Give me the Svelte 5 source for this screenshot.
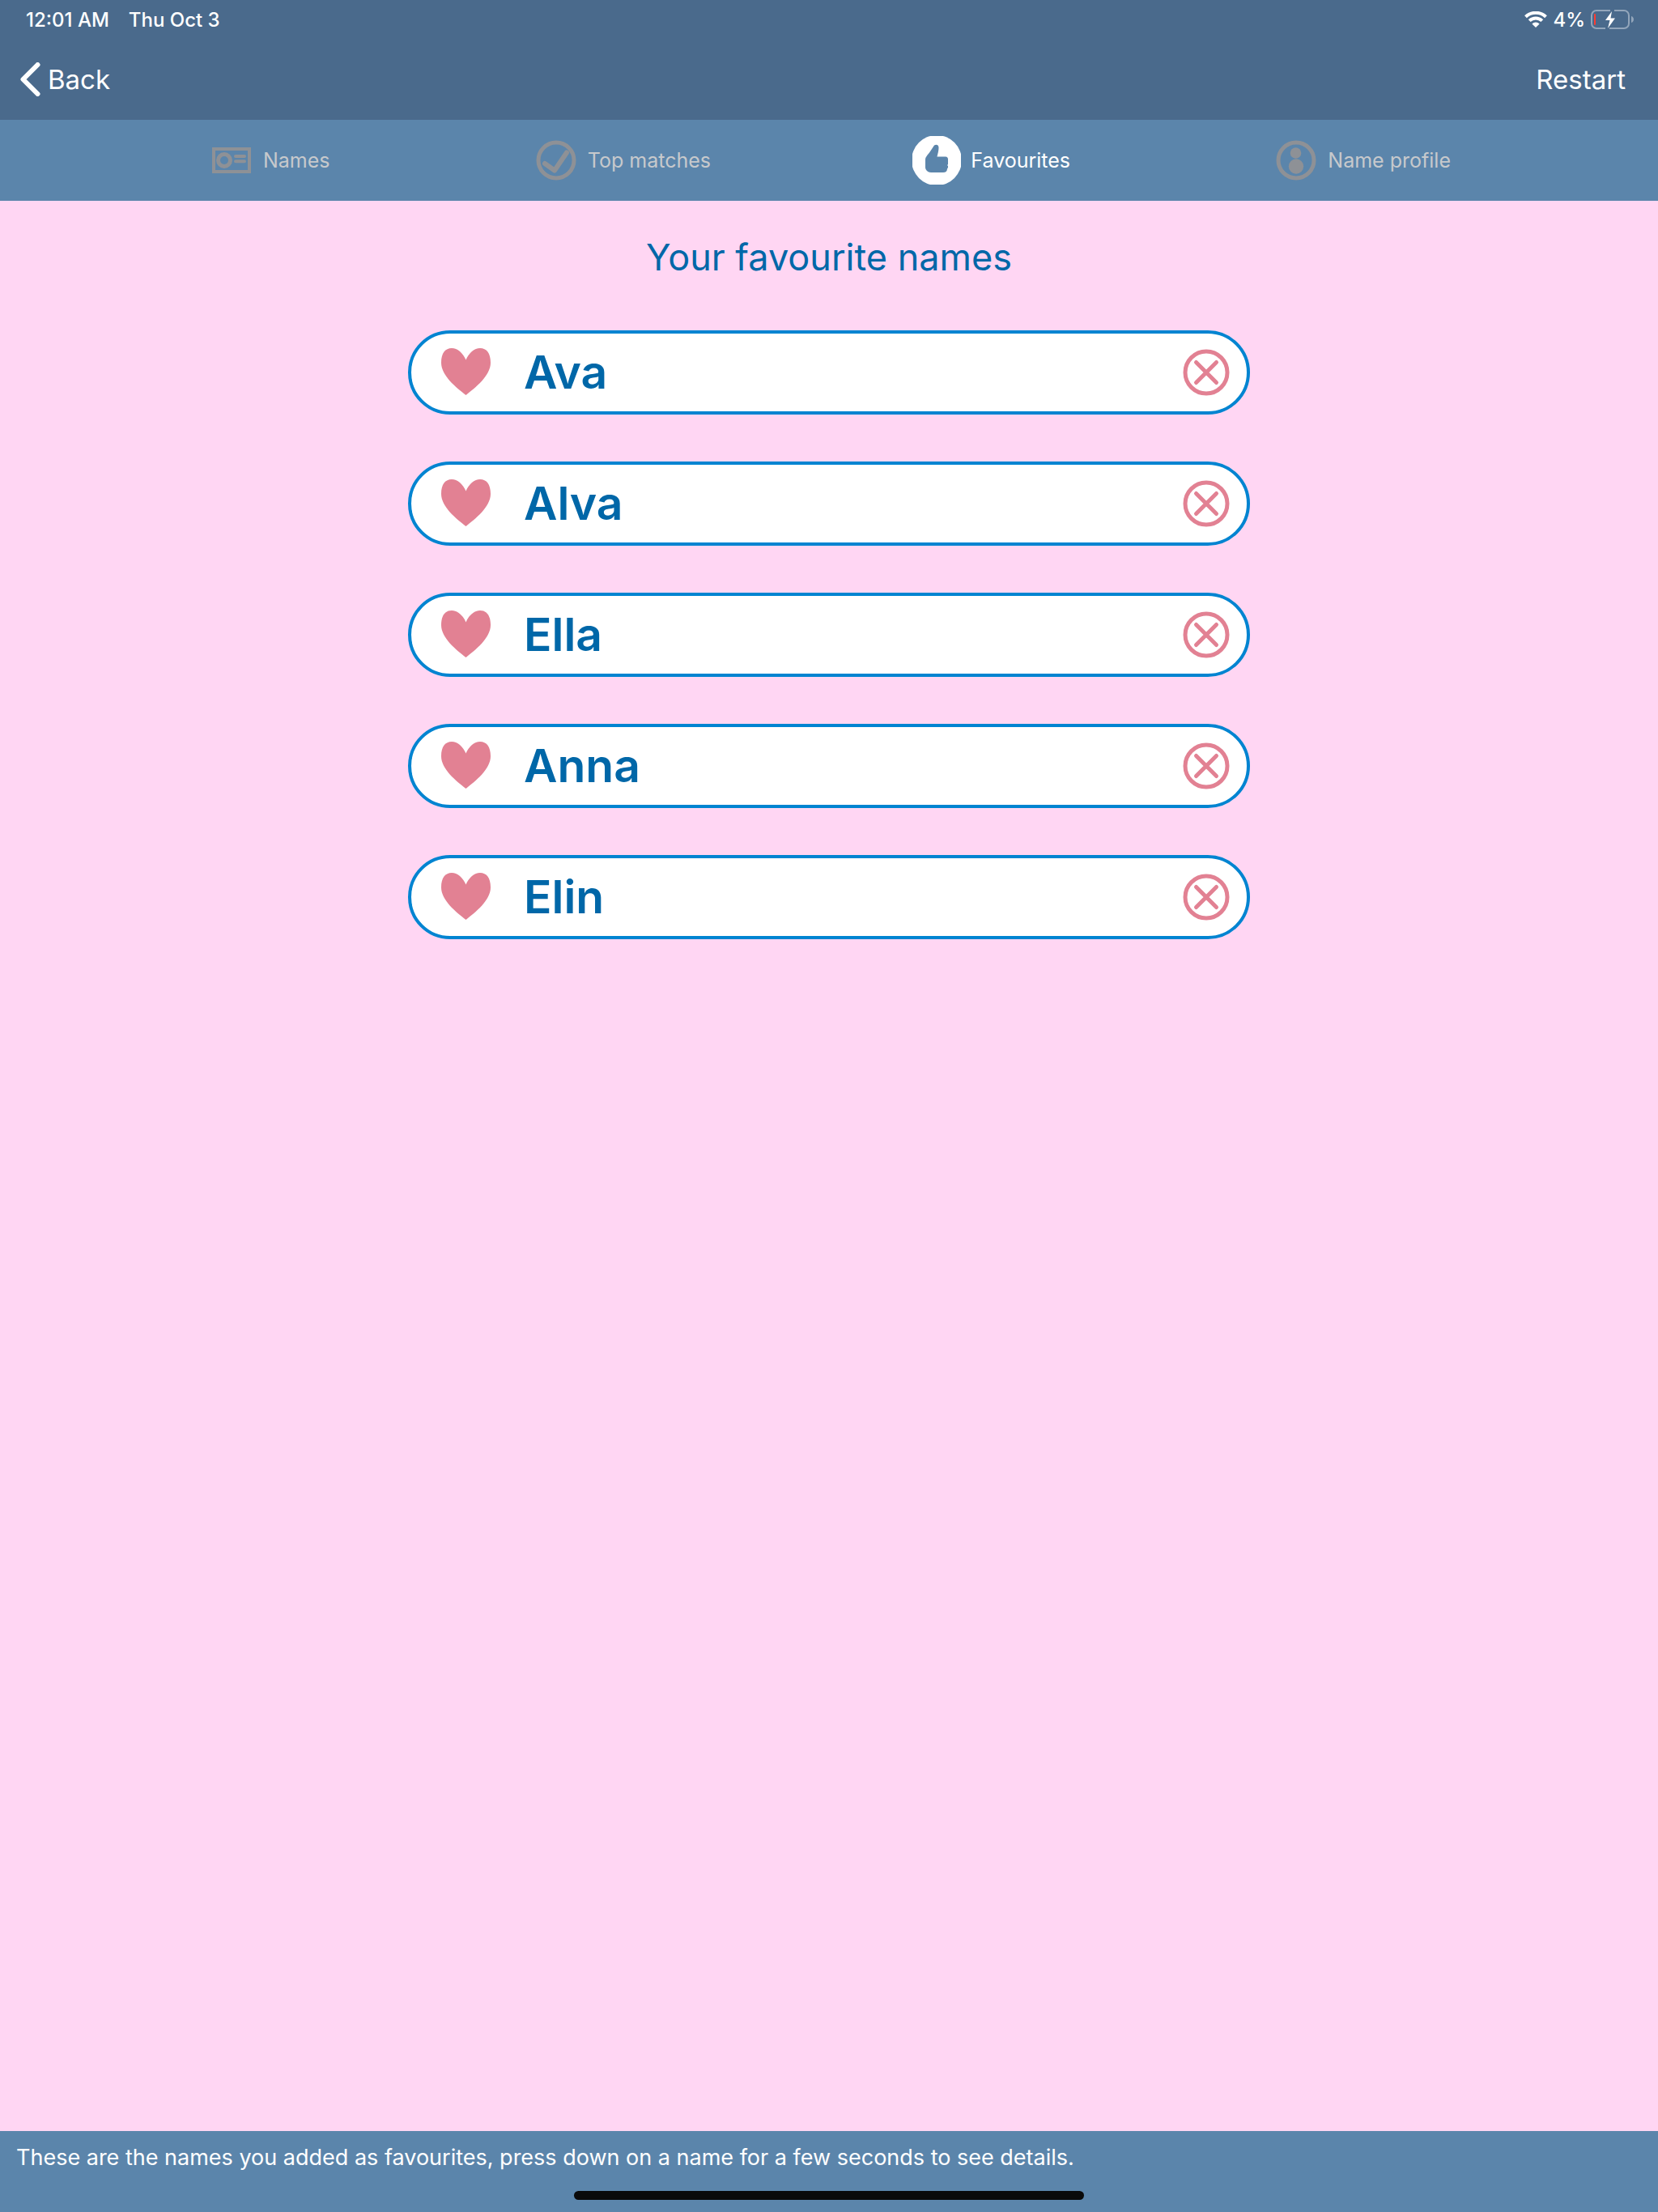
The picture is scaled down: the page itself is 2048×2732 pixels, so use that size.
<!-- App.svelte -->
<script lang="ts">
	type TabId = 'names' | 'matches' | 'favourites' | 'profile';

	const tabs: { id: TabId; label: string }[] = [
		{ id: 'names', label: 'Names' },
		{ id: 'matches', label: 'Top matches' },
		{ id: 'favourites', label: 'Favourites' },
		{ id: 'profile', label: 'Name profile' }
	];

	const initialNames = ['Ava', 'Alva', 'Ella', 'Anna', 'Elin'];

	let activeTab = $state<TabId>('favourites');
	let favourites = $state<string[]>([...initialNames]);

	function removeName(name: string) {
		favourites = favourites.filter((n) => n !== name);
	}

	function restart() {
		favourites = [...initialNames];
	}
</script>

<div class="screen">
	<header>
		<div class="status-bar">
			<div class="status-group left">
				<span>12:01 AM</span>
				<span>Thu Oct 3</span>
			</div>
			<div class="status-group">
				<svg class="wifi" viewBox="0 0 28 20" aria-hidden="true">
					<path d="M1.5 6.8a18 18 0 0 1 25 0M6.2 11.6a11.2 11.2 0 0 1 15.6 0" />
					<path class="dot" d="M14 20l-4.6-4.6a6.5 6.5 0 0 1 9.2 0z" />
				</svg>
				<span>4%</span>
				<svg class="battery" viewBox="0 0 53 24" aria-hidden="true">
					<path
						class="shell"
						d="M24 1H7a6 6 0 0 0-6 6v10a6 6 0 0 0 6 6h11M29 1h12a6 6 0 0 1 6 6v10a6 6 0 0 1-6 6H23"
					/>
					<path class="nub" d="M50 8a4.2 4.2 0 0 1 0 8z" />
					<rect class="level" x="4" y="5" width="2" height="14" rx="1" />
					<path class="bolt" d="M26 2l-8 11h5.5l-2.5 10 9-12.5h-5.5z" />
				</svg>
			</div>
		</div>

		<nav class="nav-bar">
			<button class="nav-btn back">
				<svg viewBox="0 0 26 42" aria-hidden="true">
					<path d="M21.5 3L3.5 21l18 18" />
				</svg>
				Back
			</button>
			<button class="nav-btn" onclick={restart}>Restart</button>
		</nav>
	</header>

	<div class="tabs" role="tablist">
		{#each tabs as tab}
			<button
				class="tab"
				class:active={activeTab === tab.id}
				role="tab"
				aria-selected={activeTab === tab.id}
				onclick={() => (activeTab = tab.id)}
			>
				<svg viewBox="0 0 60 60" aria-hidden="true">
					{#if tab.id === 'names'}
						<rect class="line thin" x="8" y="16" width="44" height="28" />
						<circle class="line" cx="21" cy="30" r="7.5" />
						<path class="line thin round" d="M35 25h11M35 31.2h11" />
					{:else if tab.id === 'matches'}
						<circle class="line" cx="30" cy="30" r="22" />
						<path class="line thick round" d="M16 34l12 8.5L43 20.5" />
					{:else if tab.id === 'favourites'}
						<circle class="fill" cx="30" cy="30" r="31" />
						<path
							class="thumb"
							d="M26 13c1.5-3.5 6.5-3 6.5 1 0 4-1 7.5-2 11.5h10.5c2 0 3 1.5 3 3v6.5l-1 1 1 1v2l-1 1.5c0 3-2 4.5-5 4.5H23c-4 0-7-3-7-6.5V29.5c0-4 3-6 5-9z"
						/>
					{:else}
						<circle class="line" cx="30" cy="30" r="22" />
						<circle class="fill" cx="29.5" cy="21" r="6.8" />
						<circle class="fill" cx="30" cy="37.5" r="9.2" />
					{/if}
				</svg>
				{tab.label}
			</button>
		{/each}
	</div>

	<main>
		<h1>Your favourite names</h1>
		<ul class="name-list">
			{#each favourites as name (name)}
				<li class="name-item">
					<svg class="heart" viewBox="0 0 61 60" aria-hidden="true">
						<path
							d="M30.5 58C19 49 0 34 0 18 0 6 5 0 13 0c7 0 14 6 17.5 14.5C34 6 41 0 48 0c8 0 13 6 13 18 0 16-19 31-30.5 40z"
						/>
					</svg>
					<span class="name">{name}</span>
					<button class="remove-btn" aria-label="Remove {name}" onclick={() => removeName(name)}>
						<svg viewBox="0 0 58 58" aria-hidden="true">
							<circle cx="29" cy="29" r="26" />
							<path d="M16.5 16.5l25 25M41.5 16.5l-25 25" />
						</svg>
					</button>
				</li>
			{/each}
		</ul>
	</main>

	<footer>
		<p>These are the names you added as favourites, press down on a name for a few seconds to see details.</p>
		<div class="home-indicator"></div>
	</footer>
</div>

<style>
	:global(body) {
		margin: 0;
	}

	.screen {
		min-height: 100vh;
		display: flex;
		flex-direction: column;
		background: #ffd6f3;
		font-family: Inter, 'Liberation Sans', sans-serif;
	}

	svg {
		display: block;
		flex: none;
		fill: none;
	}

	button {
		margin: 0;
		padding: 0;
		border: none;
		background: none;
		font: inherit;
		color: inherit;
		cursor: pointer;
	}

	header {
		background: #4a6a8c;
		color: #fff;
	}

	/* Status bar */
	.status-bar {
		height: 48px;
		display: flex;
		justify-content: space-between;
		align-items: center;
		padding: 0 30px 0 32px;
		font-size: 24px;
		font-weight: 500;
	}

	.status-group {
		display: flex;
		align-items: center;
		gap: 7px;
	}

	.status-group.left {
		gap: 24px;
	}

	.wifi {
		width: 28px;
		height: 20px;
		stroke: #fff;
		stroke-width: 4;
	}

	.wifi .dot {
		fill: #fff;
		stroke: none;
	}

	.battery {
		width: 53px;
		height: 24px;
	}

	.shell {
		stroke: #93a6bb;
		stroke-width: 2;
	}

	.nub {
		fill: #93a6bb;
	}

	.level {
		fill: #ff3b30;
	}

	.bolt {
		fill: #fff;
	}

	/* Back / Restart */
	.nav-bar {
		height: 100px;
		display: flex;
		justify-content: space-between;
		align-items: center;
		padding: 0 40px 0 25px;
	}

	.nav-btn {
		display: flex;
		align-items: center;
		gap: 8px;
		font-size: 33px;
		line-height: 44px;
	}

	.back svg {
		width: 26px;
		height: 42px;
		stroke: #fff;
		stroke-width: 6;
		stroke-linecap: round;
		stroke-linejoin: round;
	}

	/* Tabs */
	.tabs {
		height: 100px;
		display: flex;
		justify-content: space-between;
		align-items: center;
		padding: 0 12.5%;
		background: #5b85ab;
	}

	.tab {
		display: flex;
		align-items: center;
		gap: 9px;
		font-size: 25px;
		color: #c7c9cc;
	}

	.tab.active {
		gap: 12px;
		color: #fff;
	}

	.tab svg {
		width: 60px;
		height: 60px;
		color: #8e9196;
	}

	.tab.active svg {
		color: #fff;
	}

	.line {
		stroke: currentColor;
		stroke-width: 5;
	}

	.line.thin {
		stroke-width: 4;
	}

	.line.thick {
		stroke-width: 6;
	}

	.round {
		stroke-linecap: round;
		stroke-linejoin: round;
	}

	.fill {
		fill: currentColor;
	}

	.thumb {
		fill: #5b85ab;
	}

	/* Favourites list */
	main {
		flex: 1;
		padding: 40px 24px;
	}

	h1 {
		margin: 0 0 60px;
		font-size: 45px;
		font-weight: 400;
		line-height: 60px;
		text-align: center;
		color: #0067a8;
	}

	.name-list {
		max-width: 1040px;
		margin: 0 auto;
		padding: 0;
		list-style: none;
		display: flex;
		flex-direction: column;
		gap: 58px;
	}

	.name-item {
		height: 104px;
		box-sizing: border-box;
		display: flex;
		align-items: center;
		gap: 41px;
		padding: 0 21px 0 37px;
		border: 4px solid #0084d1;
		border-radius: 52px;
		background: #fff;
	}

	.heart {
		width: 61px;
		height: 60px;
		fill: #e28193;
	}

	.name {
		flex: 1;
		font-size: 57px;
		font-weight: 600;
		line-height: 72px;
		color: #0067a8;
	}

	.remove-btn svg {
		width: 58px;
		height: 58px;
		stroke: #e28193;
		stroke-width: 5;
		stroke-linecap: round;
	}

	footer {
		display: flex;
		flex-direction: column;
		gap: 23px;
		padding: 15px 20px;
		background: #5b85ab;
		color: #fff;
	}

	footer p {
		margin: 0;
		font-size: 27px;
		line-height: 36px;
	}

	.home-indicator {
		width: 630px;
		max-width: 60%;
		height: 11px;
		margin: 0 auto;
		border-radius: 6px;
		background: #0a0a0a;
	}
</style>
